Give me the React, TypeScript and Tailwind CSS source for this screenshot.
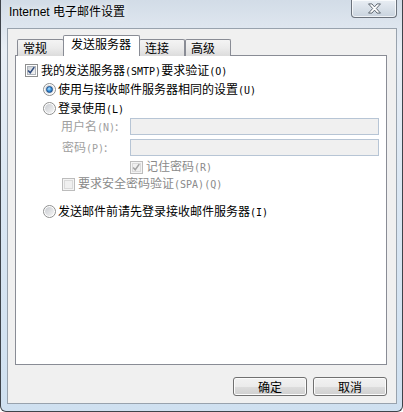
import type { ReactNode } from "react"

const cjk = "font-['Noto_Sans_CJK_SC',sans-serif] text-[12px] leading-[14px]"

// half-width latin inside the chinese labels, 6px per glyph like a bitmap song font
function Ab({ children }: { children: ReactNode }) {
  return <span className="font-['DejaVu_Sans_Mono',monospace] text-[10px]">{children}</span>
}

function Check({ checked, disabled }: { checked?: boolean; disabled?: boolean }) {
  return (
    <span
      className={`relative flex h-[13px] w-[13px] shrink-0 items-center justify-center border ${
        disabled ? "border-[#bcbcbc] bg-[#f4f4f4]" : "border-[#8e8f8f] bg-white"
      }`}
    >
      <span
        className={`h-[9px] w-[9px] border ${
          disabled
            ? "border-[#dadada] bg-[#f0f0f0]"
            : "border-[#aeb3b9] bg-gradient-to-br from-[#cbcfd5] to-[#f6f6f6]"
        }`}
      />
      {checked && (
        <svg viewBox="0 0 13 13" className="absolute left-0 top-0 h-[11px] w-[11px]">
          <path
            d="M2.5 6.5 L5 9.2 L9.8 2.5"
            fill="none"
            stroke={disabled ? "#a3a3a3" : "#2e4b7e"}
            strokeWidth="1.8"
          />
        </svg>
      )}
    </span>
  )
}

function Radio({ on }: { on?: boolean }) {
  return (
    <span className="relative flex h-[13px] w-[13px] shrink-0 items-center justify-center rounded-full border border-[#8e8f8f] bg-white">
      <span className="flex h-[9px] w-[9px] items-center justify-center rounded-full bg-gradient-to-br from-[#c9ccd1] to-[#f5f5f5]">
        {on && (
          <span className="h-[7px] w-[7px] rounded-full border border-[#1b4d8a] bg-[radial-gradient(circle_at_40%_35%,#b9e4ff_0%,#3f9ae0_45%,#0f4f98_100%)]" />
        )}
      </span>
    </span>
  )
}

function Tab({ children, active, w }: { children: ReactNode; active?: boolean; w: string }) {
  if (active)
    return (
      <div
        className={`relative z-10 -mx-[1px] h-[21px] ${w} rounded-t-[2px] border border-b-0 border-[#898c95] bg-white pl-[7px] pt-[1px] ${cjk} text-black`}
      >
        {children}
      </div>
    )
  return (
    <div
      className={`h-[17px] ${w} rounded-t-[2px] border border-b-0 border-[#898c95] bg-gradient-to-b from-[#f4f4f4] via-[#ebebeb] to-[#dcdcdc] pl-[5px] pt-[1px] ${cjk} text-black`}
    >
      {children}
    </div>
  )
}

function Btn({ children }: { children: ReactNode }) {
  return (
    <div className="flex h-[19px] w-[74px] items-center justify-center rounded-[3px] border border-[#707070] bg-[linear-gradient(#f2f2f2_0%,#ebebeb_50%,#dddddd_51%,#cfcfcf_100%)] shadow-[inset_0_0_0_1px_#fcfcfc]">
      <span className={`${cjk} text-black`}>{children}</span>
    </div>
  )
}

export default function App() {
  return (
    <div className="relative h-[412px] w-[403px] overflow-hidden rounded-b-[6px] border-x border-b border-[#3e434a] bg-[linear-gradient(180deg,#d2dce7_0%,#e8eef5_12%,#dbe7f3_45%,#cfe0f0_100%)]">
      {/* title bar */}
      <div className="flex h-[28px] items-start pl-[8px] pt-[5px]">
        <span className="font-['Liberation_Sans','Noto_Sans_CJK_SC',sans-serif] text-[12px] leading-[14px] text-black [text-shadow:0_0_6px_#ffffff]">
          Internet 电子邮件设置
        </span>
      </div>
      <div className="absolute right-[5px] top-0 flex h-[18px] w-[46px] items-center justify-center rounded-b-[4px] border border-t-0 border-[#6b727c] bg-gradient-to-b from-[#e9eef4] to-[#c9d3de] shadow-[inset_0_0_0_1px_rgba(255,255,255,0.7)]">
        <svg viewBox="0 0 16 12" className="h-[11px] w-[15px]">
          <path
            d="M1.5 1 H5.2 L8 4.2 L10.8 1 H14.5 L10 6 L14.5 11 H10.8 L8 7.8 L5.2 11 H1.5 L6 6 Z"
            fill="#ffffff"
            stroke="#525b66"
            strokeWidth="1"
            strokeLinejoin="round"
          />
        </svg>
      </div>

      {/* client area */}
      <div className="ml-[6px] h-[376px] w-[390px] border border-[#98a2ad] bg-[#f0f0f0] pl-[7px] pr-[8px] pt-[6px]">
        <div className="flex h-[21px] items-end pl-[2px]">
          <Tab w="w-[47px]">常规</Tab>
          <Tab w="w-[77px]" active>
            发送服务器
          </Tab>
          <Tab w="w-[46px]">连接</Tab>
          <Tab w="w-[46px]">高级</Tab>
        </div>

        <div className={`-mt-[1px] h-[310px] w-[372px] border border-[#898c95] bg-white pt-[5px] ${cjk}`}>
          <div className="flex h-[19px] items-center gap-[3px] pl-[9px] text-black">
            <Check checked />
            <span>
              我的发送服务器<Ab>(SMTP)</Ab>要求验证<Ab>(O)</Ab>
            </span>
          </div>
          <div className="flex h-[19px] items-center gap-[2px] pl-[27px] text-black">
            <Radio on />
            <span>
              使用与接收邮件服务器相同的设置<Ab>(U)</Ab>
            </span>
          </div>
          <div className="flex h-[19px] items-center gap-[2px] pl-[27px] text-black">
            <Radio />
            <span>
              登录使用<Ab>(L)</Ab>
            </span>
          </div>
          <div className="flex h-[17px] items-center text-[#a0a0a0]">
            <span className="w-[114px] pl-[45px]">
              用户名<Ab>(N)</Ab>:
            </span>
            <div className="h-[17px] w-[249px] border border-[#b7c5d5] bg-[#f0f0f0]" />
          </div>
          <div className="mt-[4px] flex h-[17px] items-center text-[#a0a0a0]">
            <span className="w-[114px] pl-[46px]">
              密码<Ab>(P)</Ab>:
            </span>
            <div className="h-[17px] w-[249px] border border-[#b7c5d5] bg-[#f0f0f0]" />
          </div>
          <div className="mt-[2px] flex h-[18px] items-center gap-[3px] pl-[114px] text-[#8a8a8a]">
            <Check checked disabled />
            <span>
              记住密码<Ab>(R)</Ab>
            </span>
          </div>
          <div className="flex h-[16px] items-center gap-[3px] pl-[46px] text-[#8a8a8a]">
            <Check disabled />
            <span>
              要求安全密码验证<Ab>(SPA)</Ab>
              <Ab>(Q)</Ab>
            </span>
          </div>
          <div className="mt-[10px] flex h-[19px] items-center gap-[2px] pl-[27px] text-black">
            <Radio />
            <span>
              发送邮件前请先登录接收邮件服务器<Ab>(I)</Ab>
            </span>
          </div>
        </div>

        <div className="mt-[12px] flex w-[372px] justify-end gap-[6px]">
          <Btn>确定</Btn>
          <Btn>取消</Btn>
        </div>
      </div>
    </div>
  )
}
